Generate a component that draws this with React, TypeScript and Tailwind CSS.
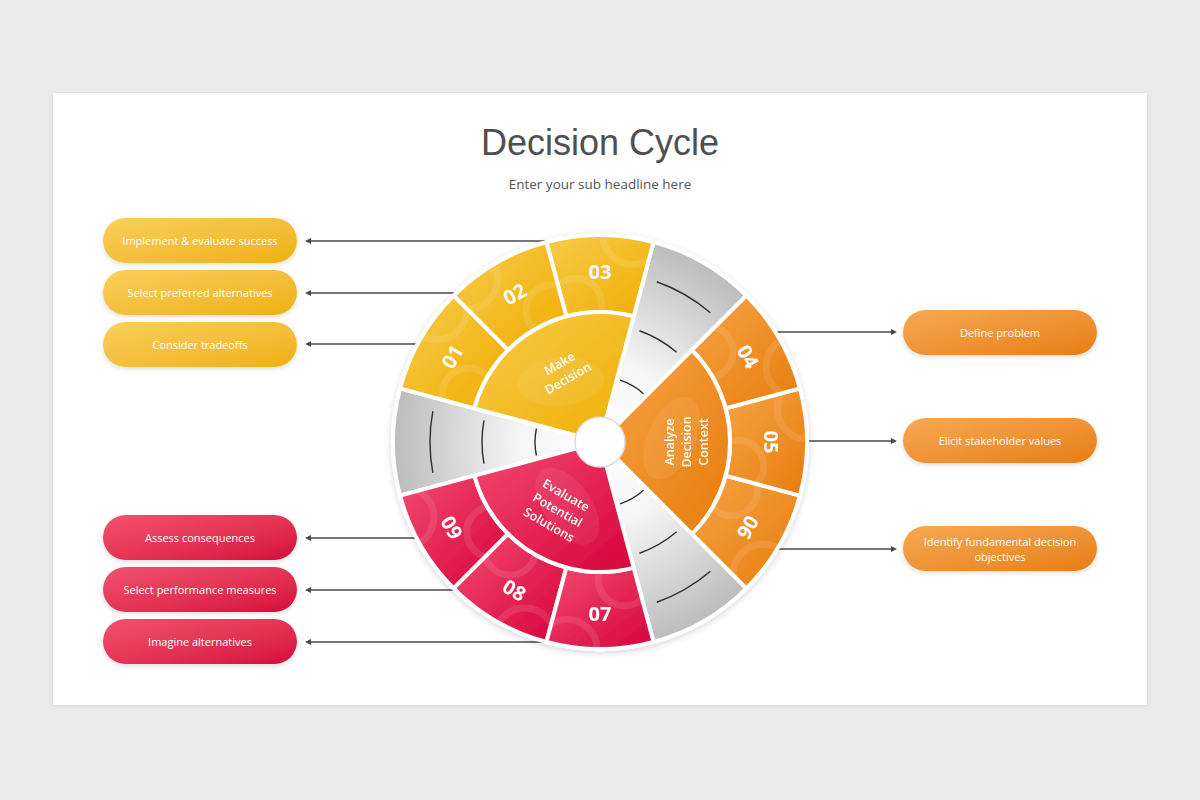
import React from "react";

const CX = 303;
const CY = 224;
const R_OUT = 207;
const R_MID = 130;

function pt(r: number, deg: number): [number, number] {
  const a = (deg * Math.PI) / 180;
  return [CX + r * Math.cos(a), CY - r * Math.sin(a)];
}

function sector(r0: number, r1: number, a1: number, a2: number): string {
  const [x1, y1] = pt(r1, a1);
  const [x2, y2] = pt(r1, a2);
  const large = a2 - a1 > 180 ? 1 : 0;
  if (r0 === 0) {
    return `M${CX},${CY} L${x1},${y1} A${r1},${r1} 0 ${large} 0 ${x2},${y2} Z`;
  }
  const [x3, y3] = pt(r0, a2);
  const [x4, y4] = pt(r0, a1);
  return `M${x1},${y1} A${r1},${r1} 0 ${large} 0 ${x2},${y2} L${x3},${y3} A${r0},${r0} 0 ${large} 1 ${x4},${y4} Z`;
}

function arc(r: number, a1: number, a2: number): string {
  const [x1, y1] = pt(r, a1);
  const [x2, y2] = pt(r, a2);
  return `M${x1},${y1} A${r},${r} 0 0 0 ${x2},${y2}`;
}

type Group = {
  start: number;
  grad: string;
  nums: string[];
  label: string[];
  labelAngle: number;
  labelR: number;
  labelRot: number;
  flip: boolean;
};

const groups: Group[] = [
  {
    start: 75,
    grad: "gy",
    nums: ["03", "02", "01"],
    label: ["Make", "Decision"],
    labelAngle: 117,
    labelR: 80,
    labelRot: -30,
    flip: false,
  },
  {
    start: -45,
    grad: "go",
    nums: ["06", "05", "04"],
    label: ["Analyze", "Decision", "Context"],
    labelAngle: 0,
    labelR: 86,
    labelRot: -90,
    flip: false,
  },
  {
    start: 195,
    grad: "gr",
    nums: ["09", "08", "07"],
    label: ["Evaluate", "Potential", "Solutions"],
    labelAngle: 238,
    labelR: 80,
    labelRot: 30,
    flip: true,
  },
];

const grays = [45, 165, 285];

const FONT = "'Open Sans', 'Noto Sans', sans-serif";

function Wheel() {
  const leftLines = [23, 75, 126, 320, 372, 424];
  const rightLines = [114, 223, 331];
  const edgeX = (y: number, side: number) => {
    const dy = y - CY;
    const dx = Math.sqrt(Math.max(0, R_OUT * R_OUT - dy * dy));
    return CX + side * (dx - 2);
  };
  return (
    <svg width={606} height={446} viewBox="0 0 606 446" className="shrink-0 overflow-visible">
      <defs>
        <linearGradient id="gy" x1="0" y1="0" x2="1" y2="1">
          <stop offset="0" stopColor="#f8cb4c" />
          <stop offset="1" stopColor="#efae02" />
        </linearGradient>
        <linearGradient id="go" x1="0" y1="0" x2="1" y2="1">
          <stop offset="0" stopColor="#f5a445" />
          <stop offset="1" stopColor="#e87c0d" />
        </linearGradient>
        <linearGradient id="gr" x1="0" y1="0" x2="1" y2="1">
          <stop offset="0" stopColor="#f24b70" />
          <stop offset="1" stopColor="#d7033b" />
        </linearGradient>
        <radialGradient id="gg" gradientUnits="userSpaceOnUse" cx={CX} cy={CY} r={R_OUT}>
          <stop offset="0" stopColor="#ffffff" />
          <stop offset="0.4" stopColor="#f5f5f5" />
          <stop offset="1" stopColor="#bcbcbc" />
        </radialGradient>
        <filter id="sh" x="-20%" y="-20%" width="140%" height="140%">
          <feDropShadow dx="0" dy="2" stdDeviation="3" floodColor="#000" floodOpacity="0.16" />
        </filter>
        {groups.map((g, gi) =>
          [0, 1, 2].map((i) => (
            <clipPath key={`c${gi}${i}`} id={`c${gi}${i}`}>
              <path d={sector(R_MID, R_OUT, g.start + 30 * i, g.start + 30 * (i + 1))} />
            </clipPath>
          ))
        )}
        {groups.map((g, gi) => (
          <clipPath key={`ci${gi}`} id={`ci${gi}`}>
            <path d={sector(0, R_MID, g.start, g.start + 90)} />
          </clipPath>
        ))}
      </defs>

      {/* arrows */}
      <g stroke="#4a4a4a" strokeWidth="1.3" fill="#4a4a4a">
        {leftLines.map((y) => (
          <g key={`l${y}`}>
            <line x1={edgeX(y, -1)} y1={y} x2={12} y2={y} />
            <path d={`M8,${y} L14,${y - 3} L14,${y + 3} Z`} stroke="none" />
          </g>
        ))}
        {rightLines.map((y) => (
          <g key={`r${y}`}>
            <line x1={edgeX(y, 1)} y1={y} x2={596} y2={y} />
            <path d={`M600,${y} L594,${y - 3} L594,${y + 3} Z`} stroke="none" />
          </g>
        ))}
      </g>

      <g filter="url(#sh)">
        {grays.map((a) => (
          <g key={`g${a}`}>
            <path d={sector(0, R_OUT, a, a + 30)} fill="url(#gg)" stroke="#fff" strokeWidth="4" strokeLinejoin="round" />
            <g stroke="#2f2f2f" strokeWidth="1.4" fill="none">
              <path d={arc(170, a + 4.5, a + 25.5)} />
              <path d={arc(118, a + 4.5, a + 25.5)} />
              <path d={arc(65, a + 3, a + 27)} />
            </g>
          </g>
        ))}
        {groups.map((g, gi) => (
          <g key={`grp${gi}`}>
            {[0, 1, 2].map((i) => {
              const a1 = g.start + 30 * i;
              const mid = a1 + 15;
              const [tx, ty] = pt(171, mid);
              const rot = g.flip ? 270 - mid : 90 - mid;
              const [rx1, ry1] = pt(140, mid + (i % 2 === 0 ? 10 : -10));
              const [rx2, ry2] = pt(210, mid + (i % 2 === 0 ? -9 : 9));
              return (
                <g key={i}>
                  <path d={sector(R_MID, R_OUT, a1, a1 + 30)} fill={`url(#${g.grad})`} />
                  <g clipPath={`url(#c${gi}${i})`} fill="none" stroke="#fff" strokeOpacity="0.1" strokeWidth="7">
                    <circle cx={rx1} cy={ry1} r={26} />
                    <circle cx={rx2} cy={ry2} r={30} />
                  </g>
                  <path d={sector(R_MID, R_OUT, a1, a1 + 30)} fill="none" stroke="#fff" strokeWidth="4" strokeLinejoin="round" />
                  <text
                    x={0}
                    y={0}
                    transform={`translate(${tx},${ty}) rotate(${rot})`}
                    textAnchor="middle"
                    dominantBaseline="central"
                    fill="#fff"
                    fontFamily={FONT}
                    fontWeight={700}
                    fontSize={20}
                  >
                    {g.nums[i]}
                  </text>
                </g>
              );
            })}
            <path d={sector(0, R_MID, g.start, g.start + 90)} fill={`url(#${g.grad})`} />
            <g clipPath={`url(#ci${gi})`}>
              {(() => {
                const [bx, by] = pt(72, g.start + 48);
                return (
                  <ellipse
                    cx={bx}
                    cy={by}
                    rx={24}
                    ry={44}
                    fill="#fff"
                    fillOpacity="0.07"
                    transform={`rotate(${-g.start - 20} ${bx} ${by})`}
                  />
                );
              })()}
            </g>
            <path d={sector(0, R_MID, g.start, g.start + 90)} fill="none" stroke="#fff" strokeWidth="4" strokeLinejoin="round" />
            {(() => {
              const [lx, ly] = pt(g.labelR, g.labelAngle);
              const n = g.label.length;
              return (
                <text
                  transform={`translate(${lx},${ly}) rotate(${g.labelRot})`}
                  textAnchor="middle"
                  fill="#fff"
                  fontFamily={FONT}
                  fontWeight={600}
                  fontSize={12.5}
                >
                  {g.label.map((l, k) => (
                    <tspan key={k} x={0} y={(k - (n - 1) / 2) * 17 + 4.5}>
                      {l}
                    </tspan>
                  ))}
                </text>
              );
            })()}
          </g>
        ))}
      </g>
      <circle cx={CX} cy={CY} r={25} fill="#fff" stroke="#dcdcdc" strokeWidth="1.5" />
    </svg>
  );
}

function Pill({ text, color }: { text: React.ReactNode; color: "y" | "o" | "r" }) {
  const cls =
    color === "y"
      ? "bg-linear-to-br from-[#f9cf5a] to-[#efb000]"
      : color === "o"
      ? "bg-linear-to-br from-[#f6aa52] to-[#e87d0c]"
      : "bg-linear-to-br from-[#f2516f] to-[#d6023b]";
  return (
    <div
      className={`h-[45px] w-[194px] rounded-full ${cls} flex items-center justify-center text-center text-white text-[11px] leading-[15px] shadow-[0_2px_5px_rgba(0,0,0,0.13)] px-4`}
      style={{ fontFamily: FONT }}
    >
      {text}
    </div>
  );
}

export default function App() {
  return (
    <div className="w-[1200px] h-[800px] bg-[#ebebeb] pt-[93px] pl-[53px]">
      <div className="w-[1094px] h-[612px] bg-white shadow-[0_1px_4px_rgba(0,0,0,0.10)] flex flex-col items-center">
        <h1
          className="mt-[30px] text-[36px] leading-[40px] text-[#4f4f4f]"
          style={{ fontFamily: "'Liberation Sans', Arial, sans-serif" }}
        >
          Decision Cycle
        </h1>
        <p className="mt-[11px] text-[13.5px] leading-[20px] text-[#555]" style={{ fontFamily: FONT }}>
          Enter your sub headline here
        </p>
        <div className="mt-[24px] flex w-full px-[50px]">
          <div className="flex h-[446px] w-[194px] shrink-0 flex-col justify-between">
            <div className="flex flex-col gap-[7px]">
              <Pill color="y" text="Implement & evaluate success" />
              <Pill color="y" text="Select preferred alternatives" />
              <Pill color="y" text="Consider tradeoffs" />
            </div>
            <div className="flex flex-col gap-[7px]">
              <Pill color="r" text="Assess consequences" />
              <Pill color="r" text="Select performance measures" />
              <Pill color="r" text="Imagine alternatives" />
            </div>
          </div>
          <Wheel />
          <div className="flex w-[194px] shrink-0 flex-col gap-[63px] pt-[92px]">
            <Pill color="o" text="Define problem" />
            <Pill color="o" text="Elicit stakeholder values" />
            <Pill
              color="o"
              text={
                <span>
                  Identify fundamental decision
                  <br />
                  objectives
                </span>
              }
            />
          </div>
        </div>
      </div>
    </div>
  );
}
